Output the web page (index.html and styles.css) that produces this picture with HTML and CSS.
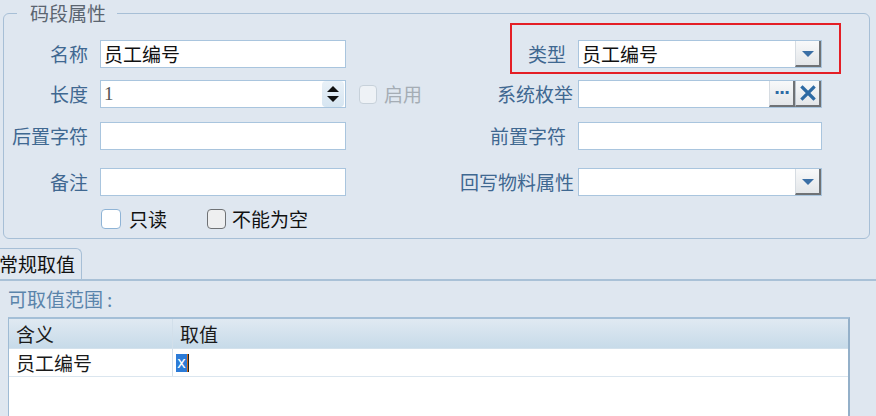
FILE: index.html
```html
<!DOCTYPE html>
<html lang="zh-CN">
<head>
<meta charset="utf-8">
<title>码段属性</title>
<link rel="stylesheet" href="styles.css">
</head>
<body>
<fieldset class="group">
  <legend class="group-title">码段属性</legend>

  <div class="row row-1">
    <span class="label">名称</span>
    <div class="field"><span class="value">员工编号</span></div>
    <div class="middle"><span class="label label-right">类型</span></div>
    <div class="field field-right combo">
      <span class="value">员工编号</span>
      <span class="btn drop-btn"><span class="arrow"></span></span>
      <span class="annot"></span>
    </div>
  </div>

  <div class="row row-2">
    <span class="label">长度</span>
    <div class="field">
      <span class="value num">1</span>
      <span class="spinner">
        <span class="spin-up"></span>
        <span class="spin-down"></span>
      </span>
    </div>
    <div class="middle">
      <label class="check disabled"><span class="box"></span><span>启用</span></label>
      <span class="label label-right tight">系统枚举</span>
    </div>
    <div class="field field-right">
      <span class="value"></span>
      <span class="btn dots-btn">···</span>
      <span class="btn clear-btn">
        <svg width="16" height="16" viewBox="0 0 16 16"><path d="M2.5 2.5 L13.5 13.5 M13.5 2.5 L2.5 13.5" stroke="#2d6aa4" stroke-width="3.2" stroke-linecap="square"/></svg>
      </span>
    </div>
  </div>

  <div class="row row-3">
    <span class="label">后置字符</span>
    <div class="field"><span class="value"></span></div>
    <div class="middle"><span class="label label-right">前置字符</span></div>
    <div class="field field-right"><span class="value"></span></div>
  </div>

  <div class="row row-4">
    <span class="label">备注</span>
    <div class="field"><span class="value"></span></div>
    <div class="middle"><span class="label label-right tighter">回写物料属性</span></div>
    <div class="field field-right combo">
      <span class="value"></span>
      <span class="btn drop-btn"><span class="arrow"></span></span>
    </div>
  </div>

  <div class="row row-checks">
    <label class="check"><span class="box"></span><span>只读</span></label>
    <label class="check gray"><span class="box"></span><span>不能为空</span></label>
  </div>
</fieldset>

<div class="tabs">
  <span class="tab">常规取值</span>
</div>

<div class="range-label">可取值范围<span class="colon">:</span></div>

<div class="grid">
  <div class="grid-head">
    <span class="cell col-1">含义</span>
    <span class="cell col-2">取值</span>
  </div>
  <div class="grid-row">
    <span class="cell col-1">员工编号</span>
    <span class="cell col-2"><span class="selected">x</span><span class="caret"></span></span>
  </div>
  <div class="grid-empty"></div>
</div>
</body>
</html>
```

FILE: styles.css
```css
html, body {
  margin: 0;
  padding: 0;
  background: #dfe7f0;
  overflow: hidden;
}

body {
  font-family: "Noto Sans CJK SC", "Noto Sans", sans-serif;
  font-size: 19px;
  line-height: 24px;
  color: #1a1a1a;
  width: 876px;
  height: 416px;
}

.group {
  margin: 0 6px 0 3px;
  padding: 14px 0 7px 0;
  border: 1px solid #a7bfd6;
  border-radius: 6px;
  min-width: 0;
}

.group-title {
  margin-left: 13px;
  padding: 0 11px 0 13px;
  line-height: 26px;
  color: #5b6570;
}

.row {
  display: flex;
  align-items: center;
}

.row-2 { margin-top: 12px; }
.row-3 { margin-top: 14px; }
.row-4 { margin-top: 18px; }

.label {
  width: 84px;
  text-align: right;
  color: #3f6891;
  white-space: nowrap;
  flex: none;
}

.middle {
  width: 232px;
  display: flex;
  align-items: center;
  flex: none;
}

.label-right {
  width: auto;
  margin-left: auto;
  padding-right: 12px;
}

.label-right.tight { padding-right: 5px; }
.label-right.tighter { padding-right: 4px; }

.field {
  width: 246px;
  height: 28px;
  margin-left: 12px;
  box-sizing: border-box;
  border: 1px solid #a9c5de;
  background: #fff;
  display: flex;
  align-items: stretch;
  flex: none;
}

.field-right {
  width: 244px;
  margin-left: 0;
  position: relative;
}

.value {
  flex: 1;
  padding-left: 3px;
  line-height: 26px;
  color: #111;
  white-space: nowrap;
  overflow: hidden;
}

.value.num {
  font-family: "Liberation Serif", serif;
  color: #555;
}

.btn {
  width: 26px;
  flex: none;
  box-sizing: border-box;
  display: flex;
  align-items: center;
  justify-content: center;
  background: linear-gradient(#f8f9fa, #e3e6e9);
  border-left: 1px solid #d6dce2;
  border-right: 2px solid #6f7275;
  border-bottom: 2px solid #6f7275;
}

.arrow {
  width: 0;
  height: 0;
  border-left: 6px solid transparent;
  border-right: 6px solid transparent;
  border-top: 6px solid #3b6fa5;
  margin-top: 2px;
}

.dots-btn {
  color: #2d6aa4;
  font-family: "DejaVu Sans", sans-serif;
  font-weight: bold;
  font-size: 16px;
  letter-spacing: -1px;
}

.clear-btn { border-left: 1px solid #b9c2cb; }

.spinner {
  width: 22px;
  margin: 0 1px 0 0;
  flex: none;
  display: flex;
  flex-direction: column;
  align-items: center;
  justify-content: center;
  gap: 4px;
  background: linear-gradient(#e9f1f8, #d6e5f1);
  border-radius: 4px;
}

.spin-up, .spin-down {
  width: 0;
  height: 0;
  border-left: 6px solid transparent;
  border-right: 6px solid transparent;
}

.spin-up { border-bottom: 6px solid #111; }
.spin-down { border-top: 6px solid #111; }

.annot {
  position: absolute;
  left: -69px;
  top: -18px;
  width: 331px;
  height: 51px;
  box-sizing: border-box;
  border: 2px solid #e41f26;
  pointer-events: none;
}

.check {
  display: flex;
  align-items: center;
  gap: 8px;
  color: #111;
}

.check .box {
  width: 20px;
  height: 20px;
  box-sizing: border-box;
  border: 1px solid #8fb4d6;
  border-radius: 4px;
  background: #fff;
}

.check.disabled {
  margin-left: 13px;
  gap: 7px;
  color: #a5adb5;
}

.check.disabled .box {
  width: 18px;
  height: 19px;
  border-color: #c7d1da;
  background: #eef2f6;
}

.check.gray { margin-left: 40px; gap: 6px; }

.check.gray .box {
  width: 19px;
  border-color: #6f7275;
  background: #eeeff0;
}

.row-checks {
  margin-top: 11px;
  padding-left: 97px;
}

.tabs {
  margin-top: 9px;
  height: 31px;
  border-bottom: 2px solid #a9c1d7;
  display: flex;
  align-items: flex-end;
}

.tab {
  margin-left: -8px;
  height: 31px;
  box-sizing: border-box;
  padding: 3px 6px 0 7px;
  border: 1px solid #a7bfd6;
  border-bottom: none;
  border-left: none;
  border-radius: 0 6px 0 0;
  color: #111;
  line-height: 24px;
}

.range-label {
  margin: 6px 0 0 8px;
  color: #5a84ab;
  line-height: 24px;
}

.colon { margin-left: 4px; }

.grid {
  margin: 6px 26px 0 8px;
  border: 1px solid #9fbbd4;
  border-top: 2px solid #a4bfd7;
  border-right: 2px solid #94b0c9;
  background: #fff;
}

.grid-head {
  display: flex;
  height: 29px;
  background: linear-gradient(#e0e9f2, #c7dbe9);
  border-bottom: 1px solid #d3e1ec;
}

.grid-row {
  display: flex;
  height: 27px;
  border-bottom: 1px solid #dbe6ef;
}

.cell {
  display: flex;
  align-items: center;
  line-height: 24px;
}

.col-1 {
  width: 164px;
  padding-left: 7px;
  box-sizing: border-box;
  border-right: 1px solid #d2dfea;
}

.col-2 {
  padding-left: 7px;
}

.grid-row .col-2 { padding-left: 3px; }

.selected {
  background: #2c7bd7;
  color: #fff;
  font-family: "DejaVu Sans", sans-serif;
  font-size: 15px;
  line-height: 18px;
  padding: 0 1px;
}

.caret {
  width: 1px;
  height: 18px;
  border-left: 1px solid #d06a1c;
  background: #222;
  margin-left: 0;
}

.grid-empty {
  height: 60px;
}
```
